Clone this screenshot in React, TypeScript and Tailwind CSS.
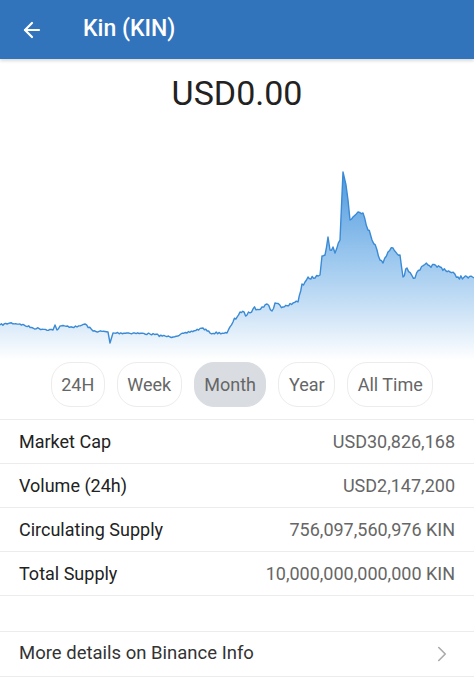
import React from "react";
import { ArrowLeft, ChevronRight } from "lucide-react";

const KEY: [number, number, number][] = [
  [0, 325, 1],
  [10, 323, 1],
  [20, 324, 1],
  [33, 328, 1],
  [53, 330, 1],
  [55, 325, 1],
  [57, 330, 1],
  [60, 326, 1],
  [77, 327, 1],
  [85, 324, 1],
  [93, 331, 1],
  [108, 332, 1],
  [110, 343, 0],
  [113, 333, 1],
  [133, 333, 1],
  [150, 334, 1],
  [170, 337, 1],
  [187, 333, 1],
  [203, 328, 1],
  [210, 333, 1],
  [227, 333, 1],
  [233, 322, 2],
  [240, 312, 2],
  [247, 315, 2],
  [253, 309, 2],
  [262, 307, 2],
  [267, 304, 2],
  [272, 311, 2],
  [275, 303, 2],
  [283, 307, 2],
  [293, 303, 2],
  [298, 302, 1],
  [302, 284, 2],
  [305, 282, 2],
  [308, 277, 2],
  [315, 278, 2],
  [320, 275, 2],
  [322, 256, 2],
  [325, 255, 2],
  [328, 237, 1],
  [330, 250, 2],
  [333, 247, 2],
  [335, 253, 2],
  [340, 240, 2],
  [343, 172, 0],
  [346, 185, 2],
  [348, 200, 2],
  [350, 220, 2],
  [353, 217, 2],
  [358, 212, 2],
  [363, 213, 2],
  [368, 230, 3],
  [372, 240, 3],
  [377, 250, 3],
  [380, 260, 2],
  [383, 263, 2],
  [388, 252, 2],
  [393, 248, 2],
  [400, 255, 2],
  [403, 277, 2],
  [407, 268, 3],
  [415, 278, 3],
  [420, 270, 3],
  [428, 265, 2],
  [440, 267, 2],
  [450, 272, 2],
  [458, 277, 2],
  [474, 278, 1],
];

const TOP = 127;

function buildPoints() {
  let seed = 7;
  const rnd = () => {
    seed = (seed * 16807) % 2147483647;
    return seed / 2147483647 - 0.5;
  };
  const pts: [number, number][] = [];
  for (let i = 0; i < KEY.length - 1; i++) {
    const [x0, y0, a0] = KEY[i];
    const [x1, y1] = KEY[i + 1];
    const steps = Math.max(1, Math.round((x1 - x0) / 1.5));
    for (let s = 0; s < steps; s++) {
      const t = s / steps;
      const x = x0 + (x1 - x0) * t;
      let y = y0 + (y1 - y0) * t;
      if (s > 0) y += rnd() * 2 * a0;
      pts.push([x, y - TOP]);
    }
  }
  const last = KEY[KEY.length - 1];
  pts.push([last[0], last[1] - TOP]);
  return pts;
}

function Chart() {
  const pts = buildPoints();
  const line = pts.map((p, i) => `${i === 0 ? "M" : "L"}${p[0].toFixed(1)},${p[1].toFixed(1)}`).join(" ");
  const h = 233;
  const area = `${line} L474,${h} L0,${h} Z`;
  return (
    <svg width={474} height={h} viewBox={`0 0 474 ${h}`} className="block shrink-0">
      <defs>
        <linearGradient id="fillg" x1="0" y1={172 - TOP} x2="0" y2={h} gradientUnits="userSpaceOnUse">
          <stop offset="0" stopColor="#4b98de" stopOpacity="1" />
          <stop offset="0.45" stopColor="#8fc0ec" stopOpacity="0.9" />
          <stop offset="1" stopColor="#ffffff" stopOpacity="1" />
        </linearGradient>
      </defs>
      <path d={area} fill="url(#fillg)" />
      <path d={line} fill="none" stroke="#3a8ad6" strokeWidth={1.4} strokeLinejoin="round" />
    </svg>
  );
}

const ranges = ["24H", "Week", "Month", "Year", "All Time"];

const rows: [string, string][] = [
  ["Market Cap", "USD30,826,168"],
  ["Volume (24h)", "USD2,147,200"],
  ["Circulating Supply", "756,097,560,976 KIN"],
  ["Total Supply", "10,000,000,000,000 KIN"],
];

export default function App() {
  return (
    <div
      className="w-[474px] h-[679px] overflow-hidden bg-white flex flex-col"
      style={{ fontFamily: "Roboto, 'Noto Sans', sans-serif" }}
    >
      <div className="h-[59px] shrink-0 bg-[#3274bc] flex items-center shadow-[0_2px_3px_rgba(0,0,0,0.15)] relative z-10">
        <div className="w-[83px] pl-[20px] flex items-center">
          <ArrowLeft size={24} color="#ffffff" strokeWidth={2.2} />
        </div>
        <span className="text-white text-[23px] font-medium">Kin (KIN)</span>
      </div>
      <div className="h-[68px] shrink-0 flex items-center justify-center">
        <span className="text-[34px] text-[#222222] leading-none">USD0.00</span>
      </div>
      <Chart />
      <div className="flex justify-center gap-[12px] pl-[10px] pt-[2px] pb-[12px] shrink-0">
        {ranges.map((r) => (
          <div
            key={r}
            className={`h-[45px] px-[9.5px] rounded-[20px] flex items-center text-[18px] text-[#666666] border ${
              r === "Month" ? "bg-[#d9dde2] border-[#d9dde2]" : "border-[#ececec] bg-white"
            }`}
          >
            {r}
          </div>
        ))}
      </div>
      <div className="border-t border-[#ececec]">
        {rows.map(([k, v]) => (
          <div key={k} className="h-[44px] border-b border-[#ececec] flex items-center justify-between px-[19px]">
            <span className="text-[18px] text-[#222222]">{k}</span>
            <span className="text-[18px] text-[#666666]">{v}</span>
          </div>
        ))}
      </div>
      <div className="h-[35px] shrink-0" />
      <div className="h-[46px] border-t border-b border-[#ececec] flex items-center justify-between pl-[19px] pr-[19px]">
        <span className="text-[18.5px] text-[#333333]">More details on Binance Info</span>
        <ChevronRight size={26} color="#aaaaaa" strokeWidth={1.5} />
      </div>
    </div>
  );
}
